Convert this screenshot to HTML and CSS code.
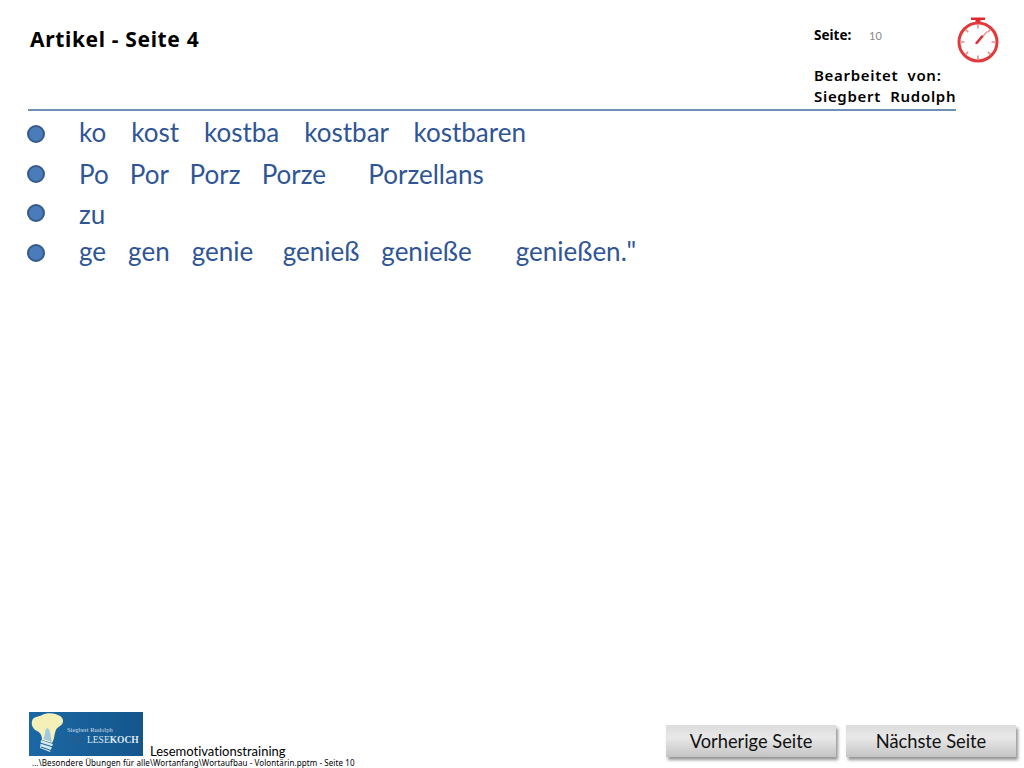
FILE: index.html
```html
<!DOCTYPE html>
<html lang="de">
<head>
<meta charset="utf-8">
<title>Artikel – Seite 4</title>
<link rel="stylesheet" href="styles.css">
</head>
<body>
<div class="slide">
  <header class="head">
    <h1 class="title">Artikel - Seite 4</h1>
    <div class="meta">
      <div class="page"><b class="page-label">Seite:</b><span class="page-num">10</span></div>
      <div class="author">Bearbeitet  von:<br>Siegbert  Rudolph</div>
    </div>
    <svg class="timer" viewBox="0 0 44 46" width="44" height="46" aria-hidden="true">
      <path d="M15 0.5h14v2.5h-4.5v4h-5v-4h-4.5z" fill="#e5262a"/>
      <circle cx="22" cy="25" r="19" fill="#fff" stroke="#e23a3c" stroke-width="3"/>
      <g stroke="#e88" stroke-width="1.6">
        <path d="M22 7.5v4M22 38.500v4M4.500 25h4M35.500 25h4M9.600 12.600l2.600 2.600M31.800 34.800l2.600 2.600M34.400 12.600l-2.600 2.600M12.200 34.800l-2.600 2.600"/>
      </g>
      <path d="M21 26.500L31 14.500" stroke="#e89a9a" stroke-width="1.500"/>
      <path d="M20.500 26L26 19.500" stroke="#d93034" stroke-width="2.400" stroke-linecap="round"/>
    </svg>
  </header>
  <div class="rule"></div>
  <ul class="lines">
    <li class="line l1">ko   kost   kostba   kostbar   kostbaren</li>
    <li class="line l2">Po   Por   Porz   Porze      Porzellans</li>
    <li class="line l3">zu</li>
    <li class="line l4">ge   gen   genie    genieß   genieße      genießen<span class="tail">."</span></li>
  </ul>
  <footer class="foot">
    <div class="brand">
      <div class="brand-row">
        <svg class="logo" viewBox="0 0 114 44" width="114" height="44" aria-hidden="true">
          <defs>
            <linearGradient id="logo-bg" x1="0" y1="0" x2="1" y2="0">
              <stop offset="0" stop-color="#1b68a5"/>
              <stop offset="1" stop-color="#14568c"/>
            </linearGradient>
          </defs>
          <rect width="114" height="44" fill="url(#logo-bg)"/>
          <path d="M3 9C4 4 10 5 13 3C18 0 27 1 31 4C35 6 35 12 31 14C28 16 27 17 26 21C25 25 25 28 23 31L13 28C13 24 12 21 8 19C4 17 2 13 3 9Z" fill="#f5efb8"/>
          <path d="M14 27C17 24 15 18 18 16C22 17 21 24 23 30Z" fill="#9fc9de"/>
          <path d="M12 28L24 32L21 40L11 36Z" fill="#d5e7ee"/>
          <path d="M11 31L24 35M12 35L22 38.500" stroke="#17609a" stroke-width="1"/>
          <text class="logo-small" x="38" y="20">Siegbert Rudolph</text>
          <text class="logo-dark" x="38" y="31">DIE</text>
          <text class="logo-big" x="58" y="31">LESE<tspan class="logo-bold">KOCH</tspan></text>
        </svg>
        <span class="brand-name">Lesemotivationstraining</span>
      </div>
      <div class="path">...\Besondere Übungen für alle\Wortanfang\Wortaufbau - Volontärin.pptm - Seite 10</div>
    </div>
    <nav class="nav">
      <a class="btn">Vorherige Seite</a>
      <a class="btn">Nächste Seite</a>
    </nav>
  </footer>
</div>
</body>
</html>
```
FILE: styles.css
```css
html, body { margin: 0; padding: 0; background: #fff; }
.slide {
  width: 1024px; height: 768px; display: flex; flex-direction: column;
  overflow: hidden; box-sizing: border-box; color: #000;
  font-family: "Lato", "Liberation Sans", sans-serif;
  font-variant-ligatures: none;
}
.head { height: 109px; flex: none; display: flex; box-sizing: border-box; padding-left: 30px; }
.title {
  margin: 26px 0 0; width: 784px; font: bold 21px/26px "Noto Sans", sans-serif; letter-spacing: .65px;
}
.meta { width: 143px; font-family: "Noto Sans", sans-serif; }
.page { display: flex; margin-top: 26px; height: 18px; align-items: center; }
.page-label { font-size: 13.500px; width: 55px; }
.page-num { font: 11px "Lato", sans-serif; color: #888; }
.author { margin-top: 21px; font-size: 15px; line-height: 21px; font-weight: 600; letter-spacing: .7px; white-space: pre; }
.timer { margin: 17px 0 0 -1px; width: 44px; height: 46px; }
.rule { height: 2px; width: 928px; margin-left: 28px; background: #6f8fb5; flex: none; }
.lines { list-style: none; margin: 0; padding: 0 0 0 79px; flex: 1; color: #2f5597; font-size: 26px; }
.line { position: relative; height: 30px; line-height: 30px; white-space: pre; }
.line::before {
  content: ""; position: absolute; left: -52px; top: 8px; width: 14px; height: 14px;
  border-radius: 50%; background: #4a7cba; border: 2.500px solid #355a8c;
}
.l1 { margin-top: 6px; word-spacing: 1.680px; }
.l2 { margin-top: 12px; word-spacing: .4px; }
.l2::before { top: 6px; }
.l3 { margin-top: 10px; }
.l3::before { top: 5px; }
.l4 { margin-top: 7px; word-spacing: .7px; }
.tail { letter-spacing: 2.500px; }
.foot { height: 61px; flex: none; display: flex; justify-content: space-between; box-sizing: border-box; padding-top: 5px; }
.brand { margin-left: 29px; }
.brand-row { display: flex; align-items: flex-end; height: 46px; }
.logo { display: block; margin-bottom: 2px; }
.brand-name { margin-left: 7px; font-size: 13px; line-height: 13px; font-family: "Lato", sans-serif; }
.path { margin: 0 0 0 3px; font: 8px/10px "Noto Sans", sans-serif; letter-spacing: .09px; white-space: nowrap; }
.nav { display: flex; gap: 10px; margin: 13px 8px 0 0; }
.btn {
  width: 170px; height: 32px; box-sizing: border-box; text-align: center;
  font-size: 18.300px; line-height: 32px; color: #111;
  background: linear-gradient(#dcdcdc, #e8e8e8 40%, #c4c4c4);
  box-shadow: 2px 3px 3px rgba(90, 90, 90, .65);
}
.logo-small { font: 6.500px "Liberation Serif", serif; fill: #cfdce8; }
.logo-dark { font: 10px "Liberation Serif", serif; fill: #2a5f8c; }
.logo-big { font: 9.500px "Liberation Serif", serif; fill: #dfe9f0; }
.logo-bold { font-weight: bold; }
```
